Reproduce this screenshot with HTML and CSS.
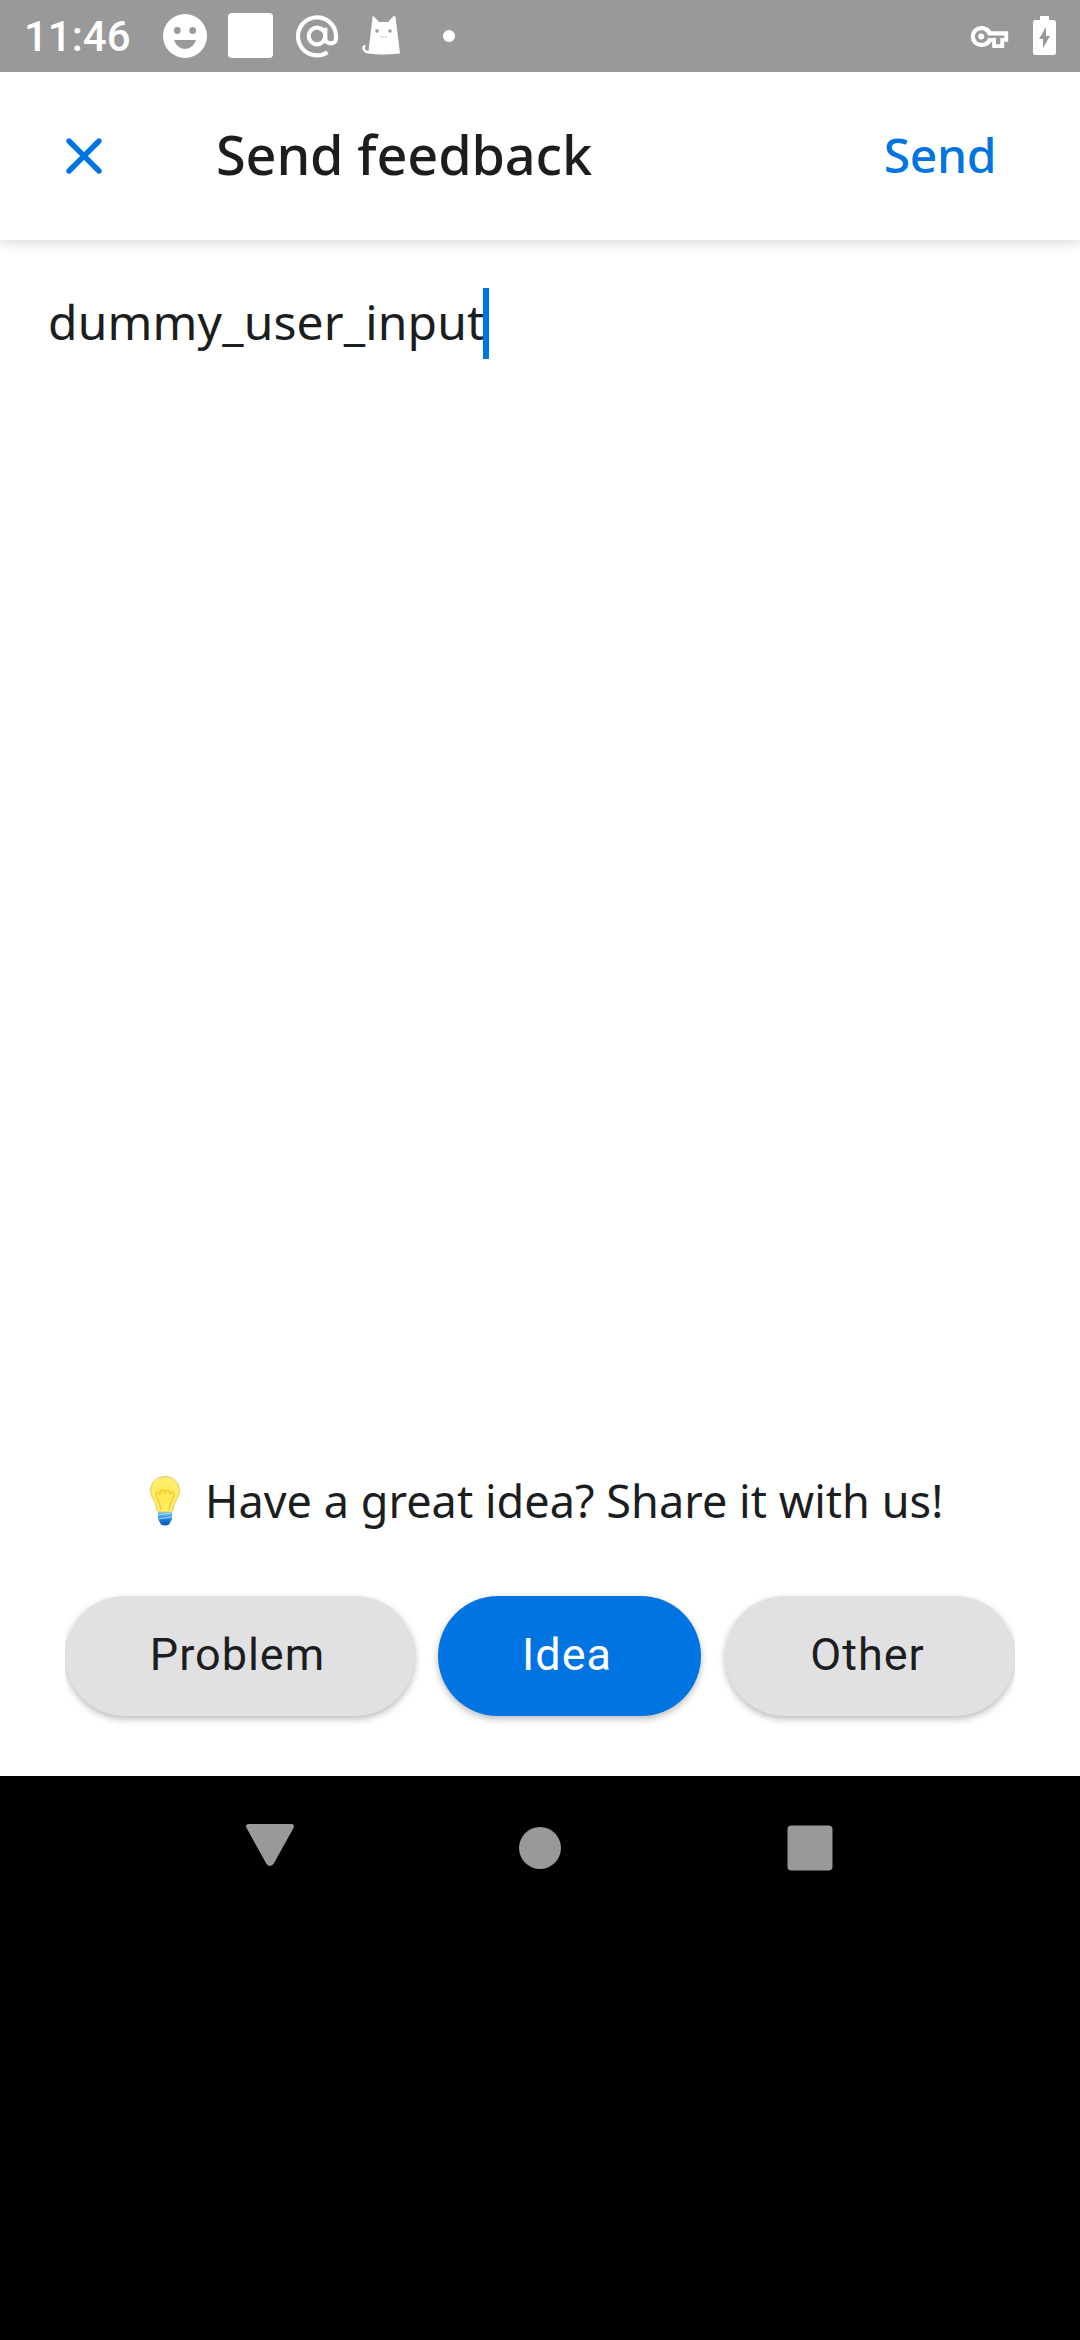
FILE: index.html
```html
<!DOCTYPE html>
<html lang="en">
<head>
<meta charset="utf-8">
<title>Send feedback</title>
<link rel="stylesheet" href="styles.css">
</head>
<body>
<div class="status">
  <span class="clock">11:46</span>
  <svg class="status-icons" width="300" height="72" viewBox="160 0 300 72" fill="#fff">
    <circle cx="185" cy="36" r="22"/>
    <g fill="#999"><circle cx="177.300" cy="30.500" r="3.400"/><circle cx="192.700" cy="30.500" r="3.400"/><path d="M174 40h22c-2 5.500-6 9-11 9s-9-3.500-11-9z"/></g>
    <rect x="228" y="13" width="45" height="45" rx="4"/>
    <g fill="none" stroke="#fff" stroke-width="4.200"><circle cx="317" cy="36" r="8.300"/><path d="M327.500 52.200A19 19 0 1 1 336 36v2.800c0 6-10.700 6-10.700 0V27.700"/></g>
    <path d="M373 15.500l6 6.500h9l6-6.500 1.500 1.500 4.500 36.500q-19 2-32 0c-6-.5-7-7.500-4-8.500 2-.5 1.500 2 .8 3 0 2 2 3 3.700 3l4.200-35z"/>
    <g fill="#999"><circle cx="377" cy="31" r="1.700"/><circle cx="390" cy="31" r="1.700"/><path d="M380 36.500h7v1h-7z" opacity=".5"/></g>
    <circle cx="449" cy="36" r="6"/>
  </svg>
  <svg class="system-icons" width="90" height="72" viewBox="968 0 90 72" fill="#fff">
    <path fill-rule="evenodd" d="M981.200 26c4.600 0 8.400 2.300 10 5.300h17v10.500h-4v6.200h-12v-6h-1c-2 3.200-5.600 5-10 5a10.500 10.500 0 0 1 0-21zm0 4.200a6.300 6.300 0 1 0 0 12.600c4.500 0 6-2.300 6.800-4.800h8v6.300h4.300V38h4v-2.500h-16.300c-.8-3-3-5.300-6.800-5.300z"/>
    <circle cx="981.200" cy="36.500" r="3"/>
    <path d="M1040 16h9v4h4.500q2.500 0 2.500 2.500v30q0 2.500-2.500 2.500h-18q-2.500 0-2.500-2.500v-30q0-2.500 2.500-2.500h4.500z"/>
    <path fill="#999" d="M1046 27v9h4l-7 12v-9h-4z"/>
  </svg>
</div>
<header class="header">
  <svg class="close" width="40" height="40" viewBox="0 0 40 40"><path d="M5 5l30 30M35 5L5 35" stroke="#0075e1" stroke-width="5.400" stroke-linecap="round"/></svg>
  <h1 class="title">Send feedback</h1>
  <span class="send">Send</span>
</header>
<main class="body">
  <div class="field"><span class="value">dummy_user_input</span><span class="caret"></span></div>
  <p class="hint">
    <svg class="bulb" width="30" height="50" viewBox="0 0 30 50">
      <defs>
        <radialGradient id="glass" cx=".5" cy=".55" r=".6"><stop offset="0" stop-color="#ffe64d"/><stop offset="1" stop-color="#fff176"/></radialGradient>
        <linearGradient id="base" x2="0" y2="1"><stop offset="0" stop-color="#82c8fa"/><stop offset=".4" stop-color="#4ba5ec"/><stop offset=".65" stop-color="#1976d2"/><stop offset="1" stop-color="#0d57ad"/></linearGradient>
      </defs>
      <path d="M8 34h14v9l-3 5.500q-4 2-8 0L8 43z" fill="url(#base)"/>
      <path d="M8 39l14-2M8 43l14-2" stroke="#a5d9fb" stroke-width="1.200"/>
      <path d="M15 .6C6.500.6.600 7 .600 14.500c0 7.500 5 9.500 6.200 18.500.3 2.500 1.700 3 3.200 3h10c1.500 0 2.900-.5 3.200-3 1.200-9 6.200-11 6.200-18.500C29.400 7 23.500.6 15 .6z" fill="url(#glass)" stroke="#dccb60" stroke-width="1"/>
      <path d="M11 34C10 24 6 22 6 18c0-3 4-2 4 1 0-6 4-6 5-2 1-4 5-4 5 2 0-3 4-4 4-1 0 4-4 6-5 16" fill="none" stroke="#f5c72f" stroke-width="1.300"/>
    </svg>
    <span class="hint-text">Have a great idea? Share it with us!</span>
  </p>
  <div class="chips">
    <span class="chip problem">Problem</span>
    <span class="chip idea">Idea</span>
    <span class="chip other">Other</span>
  </div>
</main>
<nav class="nav">
  <svg width="588" height="50" viewBox="246 1822 588 50" fill="#999">
    <path d="M249 1824h42q4 0 2.500 4l-20 36q-3.500 4-7 0l-20-36q-1.500-4 2.500-4z"/>
    <circle cx="540" cy="1848" r="21"/>
    <rect x="787.500" y="1825.500" width="45" height="45" rx="4"/>
  </svg>
</nav>
</body>
</html>
```
FILE: styles.css
```css
* { box-sizing: border-box; }
body {
  margin: 0;
  width: 1080px;
  height: 2340px;
  display: flex;
  flex-direction: column;
  background: #000;
  color: #1c1d1f;
  font-family: "Noto Sans", sans-serif;
  overflow: hidden;
}
.status {
  height: 72px;
  flex: none;
  display: flex;
  align-items: center;
  padding: 0 22px 0 24px;
  background: #999;
  color: #fff;
}
.clock {
  width: 136px;
  padding-top: 2px;
  font: 500 42px/50px Roboto, sans-serif;
}
.system-icons { margin-left: auto; }
.header {
  height: 168px;
  flex: none;
  display: flex;
  align-items: center;
  padding: 0 84px 0 64px;
  background: #fff;
  box-shadow: 0 2px 12px rgba(0, 0, 0, .17);
  clip-path: inset(0 0 -20px 0);
  position: relative;
}
.title {
  margin: 0 auto 0 112px;
  padding-bottom: 5px;
  font-size: 54px;
  font-weight: 500;
  line-height: 74px;
  letter-spacing: -.15px;
  white-space: nowrap;
}
.send {
  padding-bottom: 3px;
  color: #0075e1;
  font-size: 48px;
  font-weight: 500;
  line-height: 66px;
  letter-spacing: -.4px;
}
.body {
  height: 1536px;
  flex: none;
  display: flex;
  flex-direction: column;
  background: #fff;
}
.field {
  display: flex;
  align-items: center;
  height: 71px;
  margin: 48px 48px 0;
}
.value {
  padding-bottom: 3px;
  font-size: 48px;
  line-height: 66px;
  letter-spacing: .15px;
}
.caret {
  width: 6px;
  height: 71px;
  margin-left: -2px;
  background: #0075e1;
}
.hint {
  display: flex;
  align-items: center;
  height: 64px;
  margin: auto 0 0 150px;
}
.hint-text {
  margin-left: 25px;
  font-size: 45px;
  line-height: 62px;
  letter-spacing: .04px;
  white-space: nowrap;
}
.chips {
  display: flex;
  gap: 23px;
  height: 180px;
  margin: 51px 65px 12px;
  padding-top: 12px;
  overflow: hidden;
}
.chip {
  flex: none;
  height: 120px;
  padding-right: 5px;
  border-radius: 60px;
  background: #e1e1e3;
  box-shadow: 0 3px 7px rgba(0, 0, 0, .27);
  font: 400 45px/118px Roboto, sans-serif;
  letter-spacing: 1px;
  text-align: center;
}
.problem { width: 350px; }
.idea { width: 263px; background: #0075e1; color: #fff; }
.other { width: 290px; margin-left: 1px; }
.nav {
  display: flex;
  justify-content: center;
  padding-top: 46px;
}
```
